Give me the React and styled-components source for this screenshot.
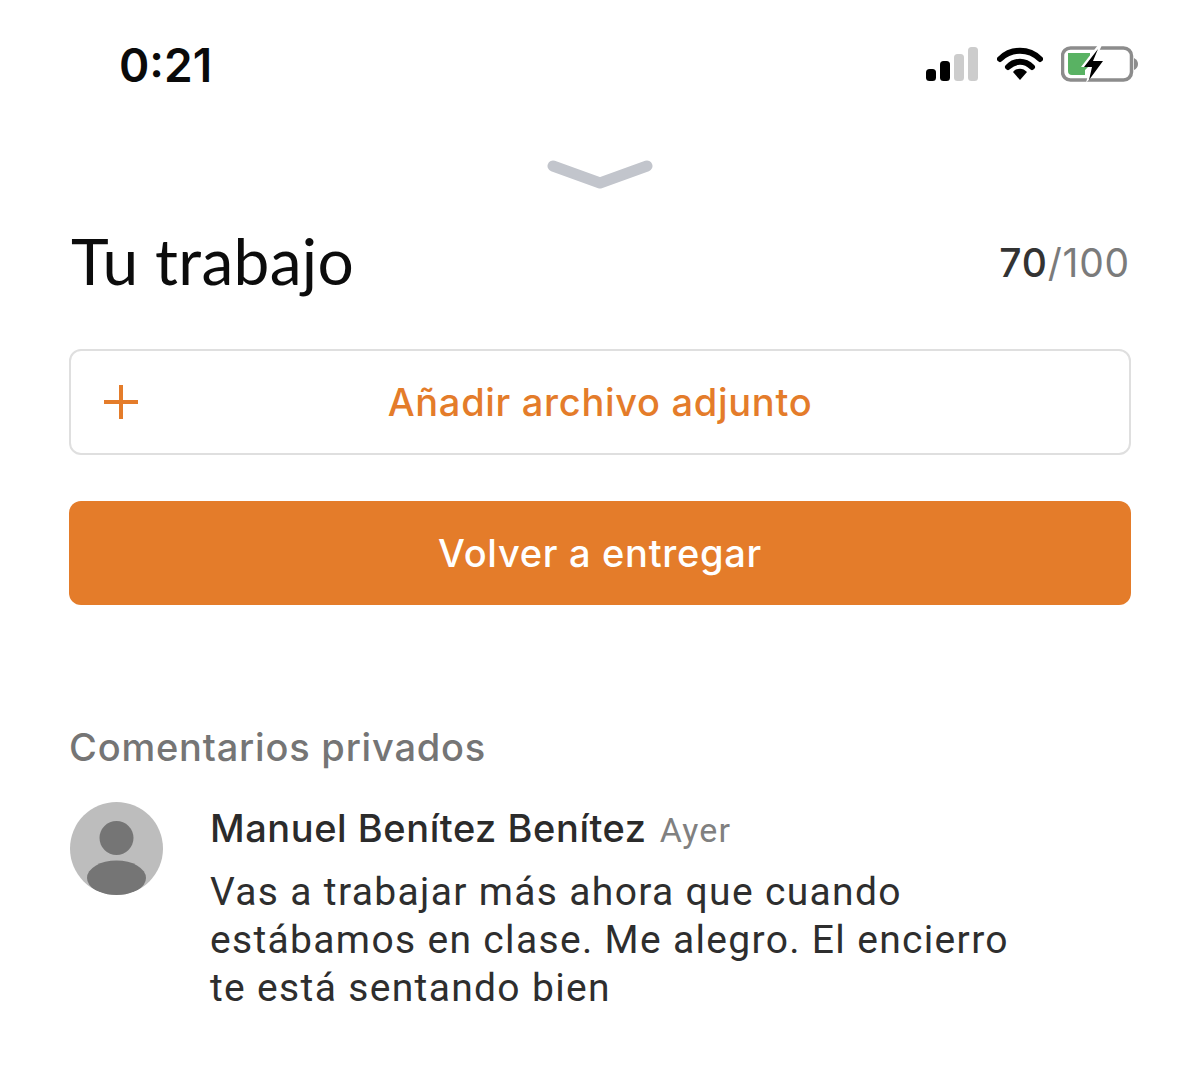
import styled, { createGlobalStyle } from "styled-components";

const GlobalStyle = createGlobalStyle`
  html, body {
    margin: 0;
    padding: 0;
    background: #fff;
  }
  body {
    font-family: Inter, "Liberation Sans", sans-serif;
  }
`;

const Page = styled.div`
  width: 1200px;
  height: 1068px;
  overflow: hidden;
  background: #fff;
`;

const StatusBar = styled.div`
  height: 130px;
  box-sizing: border-box;
  padding: 37px 62px 0 119px;
  display: flex;
  justify-content: space-between;
  align-items: flex-start;
`;

const Clock = styled.div`
  font-size: 46px;
  line-height: 56px;
  font-weight: 600;
  color: #0a0a0a;
`;

const StatusIcons = styled.div`
  display: flex;
  align-items: center;
  gap: 18px;
  margin-top: 8px;
  margin-right: -1px;
`;

const Handle = styled.div`
  display: flex;
  justify-content: center;
  height: 30px;
  margin-top: 29px;
`;

const Content = styled.div`
  padding: 0 69px;
`;

const TitleRow = styled.div`
  display: flex;
  justify-content: space-between;
  align-items: center;
  height: 88px;
  margin-top: 29px;
`;

const Title = styled.h1`
  margin: 0 0 2px 2px;
  font-family: Lato, sans-serif;
  font-weight: 400;
  font-size: 64px;
  line-height: 88px;
  letter-spacing: 0.3px;
  color: #0c0c0c;
`;

const Score = styled.div`
  font-size: 39px;
  letter-spacing: 0.8px;
  color: #7b7b7b;
  margin-right: 1px;
`;

const ScoreValue = styled.span`
  color: #333;
  font-weight: 500;
`;

const AttachButton = styled.div`
  margin-top: 43px;
  height: 106px;
  box-sizing: border-box;
  border: 2.5px solid #dfdfdf;
  border-radius: 12px;
  display: grid;
  grid-template-columns: 1fr auto 1fr;
  align-items: center;
  padding: 0 32px;
  color: #e47c2a;
  font-size: 38px;
  letter-spacing: 0.7px;
  font-weight: 500;
`;

const SubmitButton = styled.div`
  margin-top: 46px;
  height: 104px;
  background: #e47c2a;
  border-radius: 12px;
  display: flex;
  align-items: center;
  justify-content: center;
  color: #fff;
  font-size: 38px;
  letter-spacing: 0.7px;
  font-weight: 500;
`;

const SectionTitle = styled.h2`
  margin: 118px 0 0;
  font-size: 38px;
  letter-spacing: 0.8px;
  line-height: 48px;
  font-weight: 500;
  color: #757575;
`;

const Comment = styled.div`
  display: flex;
  gap: 47px;
  margin-top: 31px;
  padding-left: 1px;
`;

const Body = styled.div`
  flex: 1;
`;

const CommentHead = styled.div`
  display: flex;
  align-items: baseline;
  gap: 13px;
  line-height: 48px;
  margin-top: 2px;
`;

const Author = styled.span`
  font-size: 38px;
  letter-spacing: 0.55px;
  font-weight: 500;
  color: #2b2b2b;
`;

const When = styled.span`
  font-family: Roboto, sans-serif;
  font-size: 34px;
  letter-spacing: 1.2px;
  color: #808080;
`;

const CommentText = styled.p`
  margin: 14px 0 0;
  font-family: Roboto, sans-serif;
  font-size: 39px;
  line-height: 48px;
  letter-spacing: 1.33px;
  color: #2e2e2e;
`;

const App = () => {
  return (
    <Page>
      <GlobalStyle />
      <StatusBar>
        <Clock>0:21</Clock>
        <StatusIcons>
          <svg width="54" height="36" viewBox="0 0 54 36">
            <rect x="1" y="23" width="10" height="12" rx="3.5" fill="#000" />
            <rect x="15" y="15" width="10" height="20" rx="3.5" fill="#000" />
            <rect x="29" y="8" width="10" height="27" rx="3.5" fill="#ccc" />
            <rect x="43" y="1" width="10" height="34" rx="3.5" fill="#ccc" />
          </svg>
          <svg width="46" height="36" viewBox="0 0 46 36">
            <path d="M3 13 C14 2 32 2 43 13" fill="none" stroke="#000" strokeWidth="6" strokeLinecap="round" />
            <path d="M11 21 C18 14 28 14 35 21" fill="none" stroke="#000" strokeWidth="6" strokeLinecap="round" />
            <path d="M16 26 C20 21.500 26 21.500 30 26 L23 34 Z" fill="#000" />
          </svg>
          <svg width="78" height="38" viewBox="0 0 78 38">
            <rect x="1.500" y="3" width="69" height="32" rx="8" fill="none" stroke="#8c8c8c" strokeWidth="3.500" />
            <path d="M7 8 H29 V20 L24 25 V30 H11 Q7 30 7 26 Z" fill="#59b263" />
            <path d="M73 13 Q77 15 77 19 Q77 23 73 25 Z" fill="#8c8c8c" />
            <path d="M37 0 L20 22 H29 L25 38 L45 15 H34 L41 0 Z" fill="#fff" />
            <path d="M37 4 L23 22 H31 L28 35 L42 16 H32 Z" fill="#000" />
          </svg>
        </StatusIcons>
      </StatusBar>
      <Handle>
        <svg width="106" height="30" viewBox="0 0 106 30">
          <path d="M6 7 L53 24 L100 7" fill="none" stroke="#c2c5cc" strokeWidth="11" strokeLinecap="round" strokeLinejoin="round" />
        </svg>
      </Handle>
      <Content>
        <TitleRow>
          <Title>Tu trabajo</Title>
          <Score>
            <ScoreValue>70</ScoreValue>/100
          </Score>
        </TitleRow>
        <AttachButton>
          <svg width="36" height="36" viewBox="0 0 36 36">
            <path d="M18 1 V35 M1 18 H35" stroke="#e47c2a" strokeWidth="4" fill="none" />
          </svg>
          <span>Añadir archivo adjunto</span>
        </AttachButton>
        <SubmitButton>Volver a entregar</SubmitButton>
        <SectionTitle>Comentarios privados</SectionTitle>
        <Comment>
          <svg width="93" height="93" viewBox="0 0 93 93">
            <defs>
              <clipPath id="avatarClip">
                <circle cx="46.500" cy="46.500" r="46.500" />
              </clipPath>
            </defs>
            <circle cx="46.500" cy="46.500" r="46.500" fill="#bdbdbd" />
            <circle cx="46.500" cy="36" r="17" fill="#757575" />
            <g clipPath="url(#avatarClip)">
              <ellipse cx="46.500" cy="76" rx="29.500" ry="17.500" fill="#757575" />
            </g>
          </svg>
          <Body>
            <CommentHead>
              <Author>Manuel Benítez Benítez</Author>
              <When>Ayer</When>
            </CommentHead>
            <CommentText>
              Vas a trabajar más ahora que cuando
              <br />
              estábamos en clase. Me alegro. El encierro
              <br />
              te está sentando bien
            </CommentText>
          </Body>
        </Comment>
      </Content>
    </Page>
  );
};

export default App;
